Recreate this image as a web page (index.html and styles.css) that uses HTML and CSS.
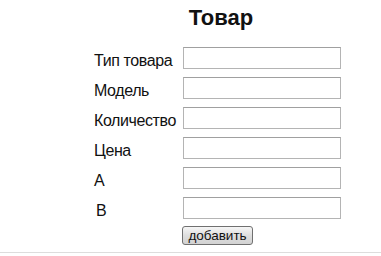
FILE: index.html
```html
<!DOCTYPE html>
<html lang="ru">
<head>
    <meta charset="UTF-8">
    <title>Товар</title>
    <link rel="stylesheet" href="styles.css">
</head>
<body>
    <div class="tovar">
        <h1 class="tovar-title">Товар</h1>
        <form class="tovar-form">
            <div class="row">
                <label for="tip">Тип товара</label>
                <input type="text" id="tip">
            </div>
            <div class="row">
                <label for="model">Модель</label>
                <input type="text" id="model">
            </div>
            <div class="row">
                <label for="kol">Количество</label>
                <input type="text" id="kol">
            </div>
            <div class="row">
                <label for="cena">Цена</label>
                <input type="text" id="cena">
            </div>
            <div class="row">
                <label for="a">A</label>
                <input type="text" id="a">
            </div>
            <div class="row">
                <label for="b" class="shift">B</label>
                <input type="text" id="b">
            </div>
            <div class="actions">
                <button type="button">добавить</button>
            </div>
        </form>
    </div>
    <div class="line"></div>
</body>
</html>
```

FILE: styles.css
```css
body {
    margin: 0;
    background: #ffffff;
    font-family: "Liberation Sans", Arial, sans-serif;
    color: #111111;
}
.tovar {
    margin-left: 94px;
    width: 247px;
    padding-top: 5px;
}
.tovar-title {
    margin: 0 0 16px 0;
    font-size: 22px;
    font-weight: bold;
    text-align: center;
    padding-left: 7px;
    line-height: 26px;
}
.tovar-form {
    display: flex;
    flex-direction: column;
    gap: 8px;
}
.row {
    display: flex;
    align-items: flex-start;
    height: 22px;
}
.row label {
    width: 89px;
    font-size: 16px;
    letter-spacing: -0.4px;
    line-height: 18px;
    padding-top: 5px;
}
.row label.shift {
    padding-left: 2px;
    width: 87px;
}
.row input {
    width: 158px;
    height: 22px;
    box-sizing: border-box;
    border: 1px solid #b4b4b4;
    border-top-color: #a0a0a0;
    background: #ffffff;
    padding: 0 3px;
    margin: 0;
}
.actions {
    display: flex;
    justify-content: center;
    margin-top: -1px;
}
button {
    width: 71px;
    height: 19px;
    padding: 0;
    font-family: "Liberation Sans", Arial, sans-serif;
    font-size: 13.5px;
    color: #111111;
    border: 1px solid #707070;
    border-radius: 3px;
    background: linear-gradient(#f6f6f6, #dedede 50%, #d2d2d2);
    line-height: 17px;
}
.line {
    margin-top: 7px;
    border-top: 1px solid #dddddd;
}
```
